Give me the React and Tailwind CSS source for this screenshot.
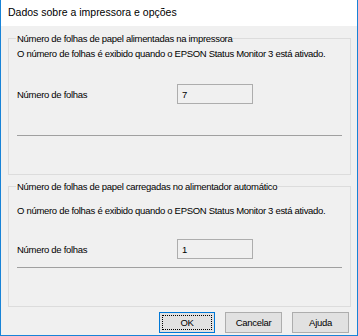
import React from "react";

const body = { fontFamily: '"Liberation Sans", Arial, sans-serif' };
const txt = "whitespace-nowrap text-[9.5px] leading-[13px] tracking-[-0.3px] text-black";

const CountGroup = ({ title, value, textTop, rowTop, lineTop, bottom }) => (
  <fieldset className={`border border-[#dcdcdc] px-[8px] ${bottom}`}>
    <legend className={`-ml-[1px] px-[1px] ${txt}`}>{title}</legend>
    <p className={`${textTop} ${txt}`}>
      O número de folhas é exibido quando o EPSON Status Monitor 3 está ativado.
    </p>
    <div className={`${rowTop} flex items-center`}>
      <span className={`w-[160px] ${txt}`}>Número de folhas</span>
      <div className={`flex h-[20px] w-[76px] items-center border border-[#adadad] bg-[#f0f0f0] px-[4px] ${txt}`}>
        {value}
      </div>
    </div>
    <div className={`${lineTop} h-px bg-[#a0a0a0]`} />
  </fieldset>
);

export default function App() {
  return (
    <div className="h-[336px] w-[358px] overflow-hidden bg-white" style={body}>
      <div className="flex h-full flex-col border-x border-b border-[#1883d7]">
        {/* Title bar */}
        <div className="flex h-[26px] shrink-0 items-center bg-white pl-[7px]">
          <span className="whitespace-nowrap text-[10.5px] text-black">Dados sobre a impressora e opções</span>
        </div>

        {/* Content */}
        <div className="flex flex-1 flex-col bg-[#f0f0f0] pl-[7px] pr-[6px] pt-[6px]">
          <CountGroup
            title="Número de folhas de papel alimentadas na impressora"
            value="7"
            textTop="mt-[2px]"
            rowTop="mt-[24px]"
            lineTop="mt-[31px]"
            bottom="pb-[38px]"
          />
          <div className="h-[5px] shrink-0" />
          <CountGroup
            title="Número de folhas de papel carregadas no alimentador automático"
            value="1"
            textTop="mt-[11px]"
            rowTop="mt-[22px]"
            lineTop="mt-[8px]"
            bottom="pb-[38px]"
          />

          {/* Buttons */}
          <div className="mt-[5px] flex justify-end gap-[10px] pr-[2px]">
            <button className={`flex h-[21px] w-[56px] items-center justify-center border border-[#0078d7] bg-[#e1e1e1] p-[2px] ${txt}`}>
              <span className="flex h-full w-full items-center justify-center border border-dotted border-black">OK</span>
            </button>
            <button className={`h-[21px] w-[57px] border border-[#adadad] bg-[#e1e1e1] ${txt}`}>Cancelar</button>
            <button className={`h-[21px] w-[57px] border border-[#adadad] bg-[#e1e1e1] ${txt}`}>Ajuda</button>
          </div>
        </div>
      </div>
    </div>
  );
}
